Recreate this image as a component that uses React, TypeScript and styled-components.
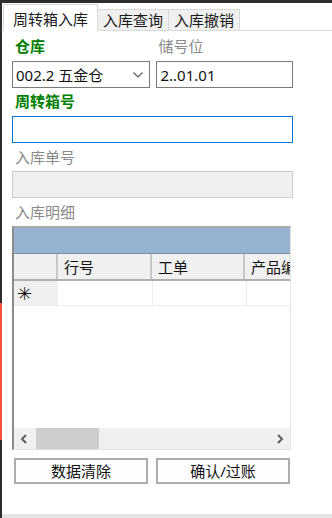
import React from 'react';
import styled, { createGlobalStyle } from 'styled-components';

const GlobalStyle = createGlobalStyle`
  html, body {
    margin: 0;
    padding: 0;
    background: #ffffff;
  }
  body {
    font-family: "Noto Sans", "Noto Sans CJK SC", sans-serif;
    font-size: 15px;
  }
`;

const Frame = styled.div`
  width: 332px;
  height: 518px;
  display: flex;
  flex-direction: column;
  overflow: hidden;
`;

const TopBar = styled.div`
  height: 3px;
  background: #2d2d2d;
  flex: none;
`;

const Body = styled.div`
  flex: 1;
  display: flex;
  min-height: 0;
`;

const Edge = styled.div`
  width: 2px;
  flex: none;
  display: flex;
  flex-direction: column;
`;

const EdgePart = styled.div<{ $h?: number; $red?: boolean }>`
  height: ${(p) => (p.$h ? `${p.$h}px` : 'auto')};
  flex: ${(p) => (p.$h ? 'none' : '1')};
  background: ${(p) => (p.$red ? '#f4513f' : '#2d2d2d')};
`;

const Content = styled.div`
  flex: 1;
  display: flex;
  flex-direction: column;
  min-width: 0;
`;

const TabStrip = styled.div`
  height: 28px;
  display: flex;
  align-items: flex-end;
  padding-left: 1px;
  flex: none;
`;

const Tab = styled.div<{ $active?: boolean }>`
  height: ${(p) => (p.$active ? '27px' : '22px')};
  padding: 0 ${(p) => (p.$active ? '9px' : '5px')};
  box-sizing: border-box;
  display: flex;
  align-items: center;
  justify-content: center;
  background: ${(p) => (p.$active ? '#ffffff' : '#f0f0f0')};
  border: 1px solid #d9d9d9;
  border-bottom: ${(p) => (p.$active ? 'none' : '1px solid #d9d9d9')};
  margin-left: ${(p) => (p.$active ? '0' : '-1px')};
  color: #1a1a1a;
  line-height: 20px;
  padding-top: ${(p) => (p.$active ? '2px' : '0')};
`;

const TabFill = styled.div`
  flex: 1;
  height: 1px;
  background: #d9d9d9;
`;

const Panel = styled.div`
  flex: 1;
  display: flex;
  flex-direction: column;
  padding: 5px 0 0 10px;
  width: 281px;
`;

const Label = styled.div<{ $green?: boolean; $gap?: number }>`
  height: 20px;
  line-height: 20px;
  margin-left: 3px;
  margin-top: ${(p) => p.$gap ?? 0}px;
  color: ${(p) => (p.$green ? '#008000' : '#8a8a8a')};
  font-weight: ${(p) => (p.$green ? 700 : 400)};
`;

const Row = styled.div<{ $gap?: number }>`
  display: flex;
  gap: 6px;
  margin-top: ${(p) => p.$gap ?? 0}px;
`;

const Field = styled.div`
  flex: 1;
`;

const SelectBox = styled.div`
  height: 27px;
  box-sizing: border-box;
  border: 1px solid #7a7a7a;
  display: flex;
  align-items: center;
  padding: 0 6px 0 3px;
  color: #111;
  justify-content: space-between;
`;

const TextBox = styled.div<{ $focus?: boolean; $disabled?: boolean; $gap?: number }>`
  height: 27px;
  box-sizing: border-box;
  border: 1px solid
    ${(p) => (p.$focus ? '#0078d7' : p.$disabled ? '#cccccc' : '#7a7a7a')};
  background: ${(p) => (p.$disabled ? '#f0f0f0' : '#ffffff')};
  display: flex;
  align-items: center;
  padding: 0 4px;
  color: #111;
  margin-top: ${(p) => p.$gap ?? 0}px;
`;

const Grid = styled.div`
  margin-top: 4px;
  height: 224px;
  width: 279px;
  box-sizing: border-box;
  border-top: 2px solid #a8a8a8;
  border-left: 2px solid #8c8c8c;
  border-right: 1px solid #e3e3e3;
  border-bottom: 1px solid #e3e3e3;
  display: flex;
  flex-direction: column;
  overflow: hidden;
`;

const Band = styled.div`
  height: 25px;
  background: #97b3d0;
  border-bottom: 1px solid #7f93a8;
  flex: none;
`;

const HeadRow = styled.div`
  height: 27px;
  display: flex;
  background: #f0f0f0;
  border-bottom: 2px solid #b0b0b0;
  flex: none;
  box-sizing: border-box;
`;

const HeadCell = styled.div<{ $w: number; $last?: boolean }>`
  width: ${(p) => p.$w}px;
  flex: none;
  box-sizing: border-box;
  border-right: ${(p) => (p.$last ? 'none' : '2px solid #c8c8c8')};
  padding-left: 6px;
  display: flex;
  align-items: center;
  white-space: nowrap;
  overflow: hidden;
  color: #111;
`;

const DataRow = styled.div`
  height: 24px;
  display: flex;
  flex: none;
  border-bottom: 1px solid #ececec;
`;

const RowHead = styled.div`
  width: 44px;
  flex: none;
  background: #f0f0f0;
  display: flex;
  align-items: center;
  padding-left: 3px;
  box-sizing: border-box;
  font-size: 18px;
  color: #111;
`;

const DataCell = styled.div<{ $w: number }>`
  width: ${(p) => p.$w}px;
  flex: none;
  border-right: 1px solid #ececec;
`;

const GridSpace = styled.div`
  flex: 1;
`;

const HScroll = styled.div`
  height: 21px;
  background: #f0f0f0;
  display: flex;
  align-items: center;
  flex: none;
`;

const ScrollArrow = styled.div`
  width: 20px;
  height: 21px;
  display: flex;
  align-items: center;
  justify-content: center;
  flex: none;
`;

const ScrollTrack = styled.div`
  flex: 1;
  height: 21px;
  display: flex;
  align-items: stretch;
`;

const ScrollThumb = styled.div`
  width: 63px;
  background: #cdcdcd;
  margin-left: 2px;
`;

const Buttons = styled.div`
  display: flex;
  gap: 8px;
  margin-top: 8px;
  padding-left: 2px;
`;

const Button = styled.button`
  width: 134px;
  height: 26px;
  box-sizing: border-box;
  border: 2px solid #adadad;
  background: #fdfdfd;
  font-family: "Noto Sans", "Noto Sans CJK SC", sans-serif;
  font-size: 15px;
  color: #111;
  padding: 0;
  line-height: 20px;
`;

const Footer = styled.div`
  height: 4px;
  background: #e3e3e3;
  flex: none;
  margin-top: auto;
`;

const Chevron = ({ dir }: { dir: 'down' | 'left' | 'right' }) => {
  if (dir === 'down')
    return (
      <svg width="10" height="6" viewBox="0 0 10 6">
        <path d="M0.5 0.5 L5 5 L9.5 0.5" fill="none" stroke="#555" strokeWidth="1.1" />
      </svg>
    );
  const d = dir === 'left' ? 'M6 1 L2 5 L6 9' : 'M2 1 L6 5 L2 9';
  return (
    <svg width="8" height="10" viewBox="0 0 8 10">
      <path d={d} fill="none" stroke="#606060" strokeWidth="2" />
    </svg>
  );
};

const cols = [
  { w: 94, name: '行号' },
  { w: 93, name: '工单' },
  { w: 60, name: '产品编码' },
];

export default function App() {
  return (
    <>
      <GlobalStyle />
      <Frame>
        <TopBar />
        <Body>
          <Edge>
            <EdgePart $h={300} />
            <EdgePart $h={137} $red />
            <EdgePart />
          </Edge>
          <Content>
            <TabStrip>
              <Tab $active>周转箱入库</Tab>
              <Tab>入库查询</Tab>
              <Tab>入库撤销</Tab>
              <TabFill />
            </TabStrip>
            <Panel>
              <Row>
                <Field>
                  <Label $green>仓库</Label>
                </Field>
                <Field>
                  <Label>储号位</Label>
                </Field>
              </Row>
              <Row $gap={5}>
                <Field>
                  <SelectBox>
                    <span>002.2 五金仓</span>
                    <Chevron dir="down" />
                  </SelectBox>
                </Field>
                <Field>
                  <TextBox>2..01.01</TextBox>
                </Field>
              </Row>
              <Label $green $gap={3}>周转箱号</Label>
              <TextBox $focus $gap={5} />
              <Label $gap={4}>入库单号</Label>
              <TextBox $disabled $gap={4} />
              <Label $gap={4}>入库明细</Label>
              <Grid>
                <Band />
                <HeadRow>
                  <HeadCell $w={44} />
                  {cols.map((c, i) => (
                    <HeadCell key={c.name} $w={c.w} $last={i === cols.length - 1}>
                      {c.name}
                    </HeadCell>
                  ))}
                </HeadRow>
                <DataRow>
                  <RowHead>✳</RowHead>
                  {cols.map((c) => (
                    <DataCell key={c.name} $w={c.w} />
                  ))}
                </DataRow>
                <GridSpace />
                <HScroll>
                  <ScrollArrow>
                    <Chevron dir="left" />
                  </ScrollArrow>
                  <ScrollTrack>
                    <ScrollThumb />
                  </ScrollTrack>
                  <ScrollArrow>
                    <Chevron dir="right" />
                  </ScrollArrow>
                </HScroll>
              </Grid>
              <Buttons>
                <Button>数据清除</Button>
                <Button>确认/过账</Button>
              </Buttons>
            </Panel>
            <Footer />
          </Content>
        </Body>
      </Frame>
    </>
  );
}
